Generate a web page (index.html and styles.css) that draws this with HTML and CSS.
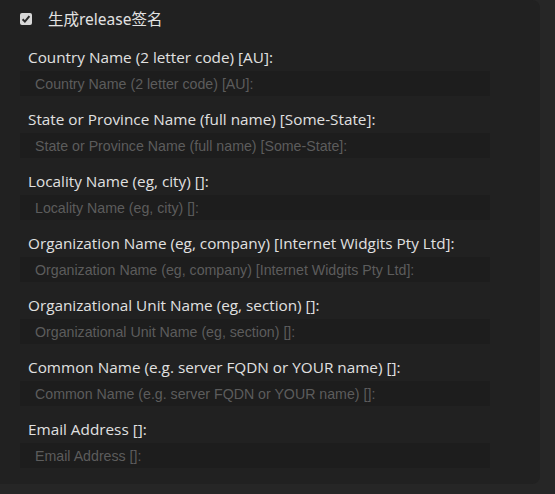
FILE: index.html
```html
<!DOCTYPE html>
<html lang="zh">
<head>
<meta charset="utf-8">
<link rel="stylesheet" href="styles.css">
</head>
<body>
<div class="panel">
  <label class="check-row">
    <span class="check-box">
      <svg viewBox="0 0 12 12" width="12" height="12"><path d="M2.6 6.2 L4.9 8.6 L9.4 3.2" fill="none" stroke="#2a2a2a" stroke-width="2"/></svg>
    </span>
    <span class="check-text">生成release签名</span>
  </label>
  <div class="fields">
    <div class="field">
      <div class="field-label">Country Name (2 letter code) [AU]:</div>
      <input class="field-input" type="text" placeholder="Country Name (2 letter code) [AU]:">
    </div>
    <div class="field">
      <div class="field-label">State or Province Name (full name) [Some-State]:</div>
      <input class="field-input" type="text" placeholder="State or Province Name (full name) [Some-State]:">
    </div>
    <div class="field">
      <div class="field-label">Locality Name (eg, city) []:</div>
      <input class="field-input" type="text" placeholder="Locality Name (eg, city) []:">
    </div>
    <div class="field">
      <div class="field-label">Organization Name (eg, company) [Internet Widgits Pty Ltd]:</div>
      <input class="field-input" type="text" placeholder="Organization Name (eg, company) [Internet Widgits Pty Ltd]:">
    </div>
    <div class="field">
      <div class="field-label">Organizational Unit Name (eg, section) []:</div>
      <input class="field-input" type="text" placeholder="Organizational Unit Name (eg, section) []:">
    </div>
    <div class="field">
      <div class="field-label">Common Name (e.g. server FQDN or YOUR name) []:</div>
      <input class="field-input" type="text" placeholder="Common Name (e.g. server FQDN or YOUR name) []:">
    </div>
    <div class="field">
      <div class="field-label">Email Address []:</div>
      <input class="field-input" type="text" placeholder="Email Address []:">
    </div>
  </div>
</div>
</body>
</html>
```

FILE: styles.css
```css
html, body {
  margin: 0;
  padding: 0;
  background: #262626;
}
body {
  width: 555px;
  height: 494px;
  overflow: hidden;
  font-family: "Open Sans", "Noto Sans CJK SC", sans-serif;
}
.panel {
  width: 540px;
  height: 484px;
  box-sizing: border-box;
  background: #212121;
  border-radius: 0 8px 8px 0;
  padding: 8px 0 0 0;
}
.check-row {
  display: flex;
  align-items: center;
  height: 22px;
  padding-left: 20px;
  gap: 16px;
}
.check-box {
  width: 12px;
  height: 12px;
  background: #d8d8d8;
  border-radius: 2px;
  display: flex;
  align-items: center;
  justify-content: center;
}
.check-text {
  color: #e2e2e2;
  font-size: 15.5px;
  font-family: "Noto Sans", "Noto Sans CJK SC", sans-serif;
  line-height: 22px;
}
.fields {
  display: flex;
  flex-direction: column;
  padding-left: 20px;
  margin-top: 17px;
}
.field {
  display: flex;
  flex-direction: column;
  height: 62px;
}
.field-label {
  color: #e0e0e0;
  font-size: 15.3px;
  line-height: 20px;
  padding-left: 8px;
  height: 20px;
  margin-bottom: 4px;
}
.field-input {
  width: 470px;
  height: 25px;
  box-sizing: border-box;
  border: none;
  outline: none;
  background: #1d1d1d;
  padding: 0 0 0 15px;
  margin: 0;
  font-family: "Liberation Sans", Arial, sans-serif;
  font-size: 14.2px;
  color: #cccccc;
}
.field-input::placeholder {
  color: #5c5c5c;
}
```
